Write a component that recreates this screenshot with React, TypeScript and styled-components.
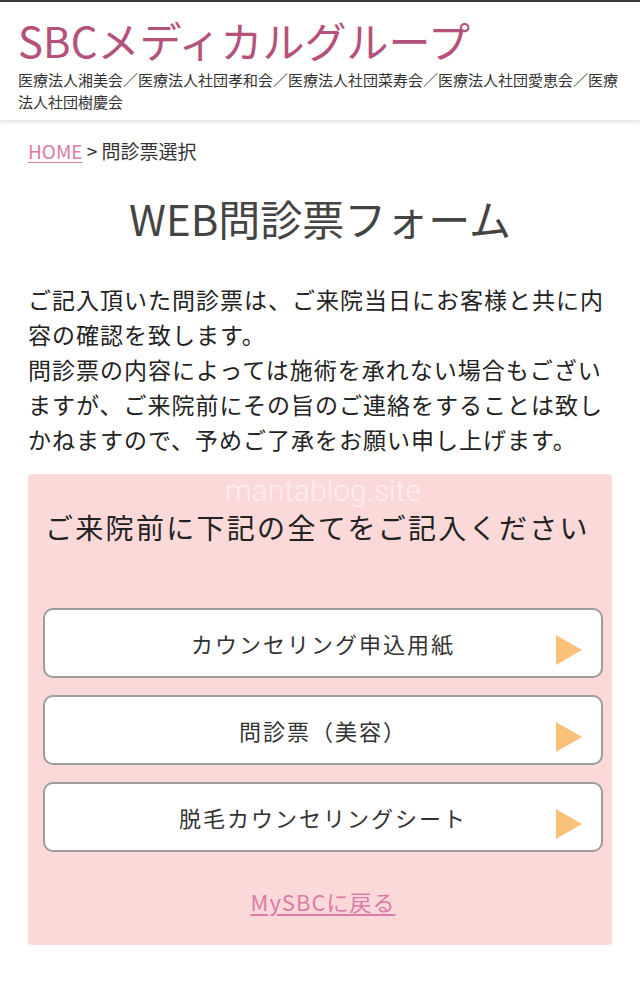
import styled, { createGlobalStyle } from 'styled-components'

const GlobalStyle = createGlobalStyle`
  html, body {
    margin: 0;
    padding: 0;
    background: #ffffff;
  }
  body {
    font-family: "Noto Sans CJK JP", "Noto Sans", sans-serif;
    color: #333333;
  }
  * {
    box-sizing: border-box;
  }
`

const Page = styled.div`
  border-top: 2px solid #3a3a3a;
  min-height: 998px;
`

const Header = styled.header`
  padding: 13px 18px 7px;
  box-shadow: 0 2px 4px rgba(0, 0, 0, 0.12);
`

const Logo = styled.div`
  font-size: 42px;
  line-height: 50px;
  color: #b5527b;
`

const Corps = styled.div`
  margin-top: 4px;
  font-size: 15px;
  line-height: 22px;
  color: #333333;
`

const Main = styled.main`
  padding: 0 28px;
`

const Breadcrumb = styled.nav`
  margin-top: 18px;
  font-size: 19px;
  line-height: 26px;
  color: #333333;
`

const PinkLink = styled.a`
  color: #dc7aa9;
  text-decoration: underline;
  text-underline-offset: 3px;
`

const Title = styled.h1`
  margin: 26px 0 0;
  font-size: 42px;
  line-height: 56px;
  font-weight: 400;
  text-align: center;
  color: #444444;
`

const Lead = styled.p`
  margin: 36px 0 0;
  font-size: 23px;
  line-height: 35px;
  letter-spacing: 1px;
  color: #222222;
`

const Box = styled.section`
  margin-top: 17px;
  padding: 3px 9px 29px 15px;
  background: #fcd9d9;
  border-radius: 4px;
  display: flex;
  flex-direction: column;
`

const Watermark = styled.div`
  font-family: Roboto, "Noto Sans", sans-serif;
  font-size: 30px;
  font-weight: 300;
  line-height: 28px;
  text-align: center;
  color: rgba(255, 255, 255, 0.55);
`

const BoxHeading = styled.h2`
  margin: 2px 0 0;
  padding-left: 2px;
  font-size: 28px;
  line-height: 40px;
  font-weight: 400;
  letter-spacing: 2.3px;
  color: #222222;
`

const FormList = styled.div`
  margin-top: 61px;
  display: flex;
  flex-direction: column;
  gap: 17px;
`

const FormButton = styled.a`
  height: 70px;
  display: grid;
  grid-template-columns: 1fr auto 1fr;
  align-items: center;
  background: #ffffff;
  border: 2px solid #9c9c9c;
  border-radius: 10px;
  color: #333333;
  text-decoration: none;
  font-size: 22px;
  letter-spacing: 2px;
`

const ButtonLabel = styled.span`
  grid-column: 2;
`

const Arrow = styled.svg`
  grid-column: 3;
  justify-self: end;
  margin: 14px 19px 0 0;
`

const BackLink = styled(PinkLink)`
  margin-top: 34px;
  align-self: center;
  font-size: 22px;
  line-height: 30px;
  letter-spacing: 1px;
`

const forms = ['カウンセリング申込用紙', '問診票（美容）', '脱毛カウンセリングシート']

export default function App() {
  return (
    <Page>
      <GlobalStyle />
      <Header>
        <Logo>SBCメディカルグループ</Logo>
        <Corps>
          医療法人湘美会／医療法人社団孝和会／医療法人社団菜寿会／医療法人社団愛恵会／医療法人社団樹慶会
        </Corps>
      </Header>
      <Main>
        <Breadcrumb>
          <PinkLink href="#">HOME</PinkLink> &gt; 問診票選択
        </Breadcrumb>
        <Title>WEB問診票フォーム</Title>
        <Lead>
          ご記入頂いた問診票は、ご来院当日にお客様と共に内容の確認を致します。
          <br />
          問診票の内容によっては施術を承れない場合もございますが、ご来院前にその旨のご連絡をすることは致しかねますので、予めご了承をお願い申し上げます。
        </Lead>
        <Box>
          <Watermark>mantablog.site</Watermark>
          <BoxHeading>ご来院前に下記の全てをご記入ください</BoxHeading>
          <FormList>
            {forms.map(name => (
              <FormButton key={name} href="#">
                <ButtonLabel>{name}</ButtonLabel>
                <Arrow width="26" height="30" viewBox="0 0 26 30">
                  <polygon points="0,0 26,15 0,30" fill="#f9c07a" />
                </Arrow>
              </FormButton>
            ))}
          </FormList>
          <BackLink href="#">MySBCに戻る</BackLink>
        </Box>
      </Main>
    </Page>
  )
}
